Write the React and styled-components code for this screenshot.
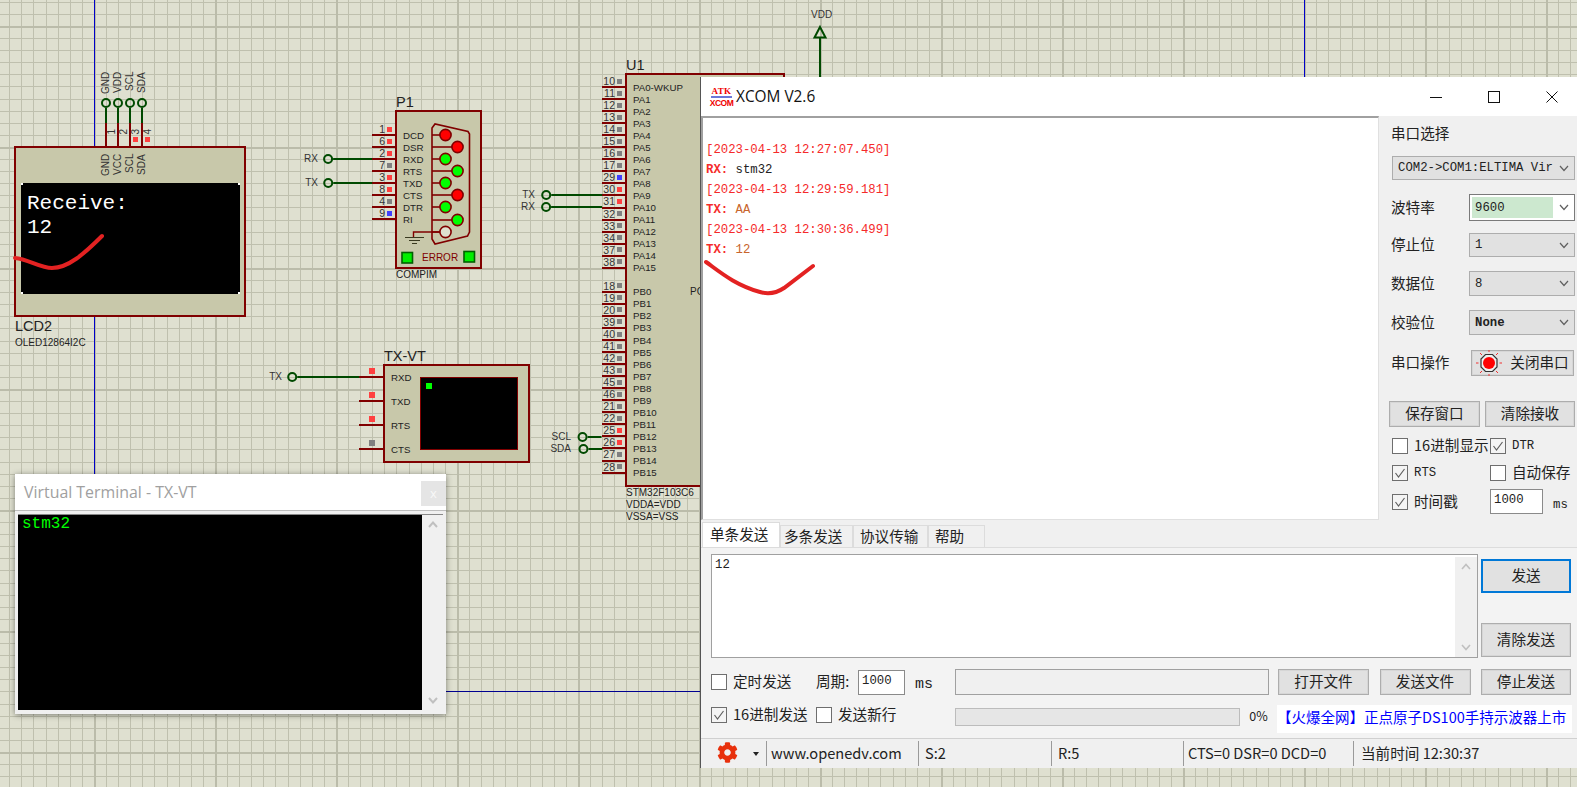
import React from "react";
import styled, { createGlobalStyle } from "styled-components";
import { FaCog } from "react-icons/fa";

const cjk = `"Noto Sans CJK SC", "Noto Sans", sans-serif`;
const sans = `"Liberation Sans", Arial, sans-serif`;
const mono = `"Liberation Mono", "Noto Sans CJK SC", monospace`;
const maroon = "#800000";
const wireGreen = "#004a00";

const GlobalStyle = createGlobalStyle`
  html, body { margin: 0; padding: 0; background: #dfe0d0; }
  * { box-sizing: border-box; }
`;

/* ---------- schematic sheet ---------- */

const Sheet = styled.div`
  position: relative;
  width: 1577px;
  height: 787px;
  overflow: hidden;
  font-family: ${sans};
  background-color: #dfe0d0;
  background-image:
    repeating-linear-gradient(90deg, #bbbcaa 94px, #bbbcaa 96px, transparent 96px, transparent 215px),
    repeating-linear-gradient(180deg, #bbbcaa 26px, #bbbcaa 28px, transparent 28px, transparent 147px),
    repeating-linear-gradient(90deg, #bfc0ae 9.3px, #bfc0ae 10.3px, transparent 10.3px, transparent 21.4px),
    repeating-linear-gradient(180deg, #bfc0ae 1.8px, #bfc0ae 2.8px, transparent 2.8px, transparent 13.9px);
`;

const BusLine = styled.div`
  position: absolute;
  left: ${(p) => p.$x}px;
  top: ${(p) => p.$y}px;
  width: ${(p) => p.$w}px;
  height: ${(p) => p.$h}px;
  background: ${(p) => p.$color || "#0000c8"};
`;

const Part = styled.div`
  position: absolute;
  left: ${(p) => p.$x}px;
  top: ${(p) => p.$y}px;
  width: ${(p) => p.$w}px;
  height: ${(p) => p.$h}px;
  background: #c8c8aa;
  border: 2px solid ${maroon};
`;

const PartRef = styled.div`
  position: absolute;
  left: ${(p) => p.$x}px;
  top: ${(p) => p.$y}px;
  transform: translateY(-50%);
  font-size: 14.5px;
  line-height: 16px;
  color: #222;
`;

const SmallText = styled.div`
  position: absolute;
  left: ${(p) => p.$x}px;
  top: ${(p) => p.$y}px;
  transform: translateY(-50%);
  font-size: 10px;
  line-height: 12px;
  white-space: nowrap;
  color: ${(p) => p.$color || "#222"};
`;

const NetStub = styled.div`
  position: absolute;
  left: ${(p) => p.$end}px;
  top: ${(p) => p.$y}px;
  transform: translate(-100%, -50%);
  display: flex;
  align-items: center;
`;

const NetName = styled.span`
  font-size: 10px;
  line-height: 12px;
  color: #333;
  margin-right: ${(p) => p.$gap}px;
`;

const Node = styled.span`
  display: block;
  flex: none;
  width: 10px;
  height: 10px;
  border: 2px solid ${wireGreen};
  border-radius: 50%;
`;

const Wire = styled.span`
  display: block;
  width: ${(p) => p.$len}px;
  height: 2px;
  background: ${wireGreen};
`;

const PinColumn = styled.div`
  position: absolute;
  left: ${(p) => p.$x}px;
  top: ${(p) => p.$y}px;
  width: ${(p) => p.$w}px;
  display: flex;
  flex-direction: column;
`;

const PinRow = styled.div`
  height: ${(p) => p.$pitch}px;
  display: flex;
  justify-content: ${(p) => (p.$bare ? "center" : "flex-end")};
  align-items: ${(p) => (p.$bare ? "flex-end" : "center")};
  gap: 2px;
  padding: ${(p) => (p.$bare ? "0 0 2px" : "0 4px 0 0")};
  border-bottom: 2px solid ${(p) => (p.$blank ? "transparent" : maroon)};
  font-size: 10.5px;
  line-height: 10px;
  color: #333;
`;

const PinDot = styled.i`
  display: block;
  flex: none;
  width: ${(p) => p.$size || 5}px;
  height: ${(p) => p.$size || 5}px;
  background: ${(p) => p.$color};
`;

const NameColumn = styled.div`
  position: absolute;
  left: ${(p) => p.$x}px;
  top: ${(p) => p.$y}px;
  display: flex;
  flex-direction: column;
`;

const NameRow = styled.div`
  height: ${(p) => p.$pitch}px;
  display: flex;
  align-items: center;
  font-size: 9.7px;
  color: #222;
  white-space: nowrap;
`;

const dotColors = { g: "#808080", r: "#ff4040", b: "#4040ff" };

function Pins({ x, y, w, pitch, rows, bare, size }) {
  return (
    <PinColumn $x={x} $y={y} $w={w}>
      {rows.map((r, i) =>
        r ? (
          <PinRow key={i} $pitch={pitch} $bare={bare}>
            {!bare && <span>{r[0]}</span>}
            <PinDot $color={dotColors[r[1]]} $size={size} />
          </PinRow>
        ) : (
          <PinRow key={i} $pitch={pitch} $blank />
        )
      )}
    </PinColumn>
  );
}

function Names({ x, y, pitch, names }) {
  return (
    <NameColumn $x={x} $y={y}>
      {names.map((n, i) => (
        <NameRow key={i} $pitch={pitch}>
          {n}
        </NameRow>
      ))}
    </NameColumn>
  );
}

/* LCD module */

const LcdPinHeader = styled.div`
  position: absolute;
  left: 100px;
  top: 72px;
  display: flex;
`;

const LcdPin = styled.div`
  width: 12px;
  display: flex;
  flex-direction: column;
  align-items: center;
`;

const UpLabel = styled.span`
  writing-mode: vertical-rl;
  transform: rotate(180deg);
  font-size: 10px;
  line-height: 12px;
  color: #333;
  height: ${(p) => p.$h}px;
  text-align: right;
`;

const GreenStem = styled.span`
  display: block;
  width: 2px;
  height: 15px;
  background: ${wireGreen};
`;

const RedStem = styled.span`
  position: relative;
  display: block;
  width: 2px;
  height: 24px;
  background: ${maroon};
`;

const StemNumber = styled.span`
  position: absolute;
  left: 2px;
  top: 6px;
  writing-mode: vertical-rl;
  transform: rotate(180deg);
  font-size: 10px;
  line-height: 10px;
  color: #333;
`;

const StemDot = styled.i`
  position: absolute;
  left: 4px;
  top: 14px;
  width: 5px;
  height: 5px;
  background: #ff4040;
`;

const LcdNames = styled.div`
  display: flex;
  height: 35px;
  margin-left: 84px;
  padding-top: 6px;
`;

const LcdScreen = styled.div`
  width: 219px;
  height: 111px;
  margin-left: 5px;
  padding: 9px 6px;
  font-family: ${mono};
  font-size: 21px;
  line-height: 24px;
  color: #fff;
  background:
    linear-gradient(#fff, #fff) 0 0 / 2px 2px no-repeat,
    linear-gradient(#fff, #fff) 100% 0 / 2px 2px no-repeat,
    linear-gradient(#fff, #fff) 0 100% / 2px 2px no-repeat,
    linear-gradient(#fff, #fff) 100% 100% / 2px 2px no-repeat,
    #000;
`;

/* virtual terminal symbol */

const VtBody = styled(Part)`
  padding: 11px 0 0 35px;
`;

const VtScreen = styled.div`
  width: 98px;
  height: 73px;
  background: #000;
  border: 1px solid ${maroon};
  padding: 5px;
`;

const VtCursor = styled.i`
  display: block;
  width: 6px;
  height: 6px;
  background: #00ff00;
`;

const ConnectorArt = styled.svg`
  position: absolute;
  left: 0;
  top: 0;
`;

const VddArt = styled.svg`
  position: absolute;
  left: 810px;
  top: 24px;
`;

const PenStroke = styled.svg`
  position: absolute;
  left: 0;
  top: 0;
  pointer-events: none;
`;

/* ---------- virtual terminal window ---------- */

const TerminalWindow = styled.div`
  position: absolute;
  left: 15px;
  top: 474px;
  width: 431px;
  height: 240px;
  display: flex;
  flex-direction: column;
  background: #f0f0f0;
  box-shadow: 0 1px 6px rgba(0, 0, 0, 0.45);
`;

const TerminalTitle = styled.div`
  height: 37px;
  flex: none;
  display: flex;
  justify-content: space-between;
  align-items: flex-end;
  padding: 0 0 4px 9px;
  background: #fff;
  font-family: "Open Sans", sans-serif;
  font-size: 15.9px;
  color: #a0a0a0;
  border-bottom: 1px solid #bdbdbd;
`;

const TerminalTitleText = styled.span`
  line-height: 28px;
`;

const GhostClose = styled.span`
  width: 25px;
  height: 25px;
  background: #e5e5e5;
  color: #f8f8f8;
  font-size: 13px;
  line-height: 25px;
  text-align: center;
`;

const TerminalBody = styled.div`
  flex: 1;
  display: flex;
  margin: 3px 3px 4px;
  border-top: 1px solid #888;
  min-height: 0;
`;

const TerminalScreen = styled.div`
  flex: 1;
  background: #000;
  color: #00ff00;
  font-family: ${mono};
  font-size: 16px;
  line-height: 16px;
  padding: 1px 4px;
`;

const ScrollTrack = styled.div`
  width: ${(p) => p.$w || 21}px;
  flex: none;
  display: flex;
  flex-direction: column;
  justify-content: space-between;
  align-items: center;
  padding: 6px 0;
  background: #f0f0f0;
`;

function Chevron({ up, color = "#606060", w = 10, sw = 1.2 }) {
  return (
    <svg width={w} height={w * 0.7} viewBox="0 0 10 7" style={{ display: "block" }}>
      <polyline
        points={up ? "1,6 5,1.5 9,6" : "1,1 5,5.5 9,1"}
        fill="none"
        stroke={color}
        strokeWidth={sw}
      />
    </svg>
  );
}

/* ---------- XCOM window ---------- */

const XcomWindow = styled.div`
  position: absolute;
  left: 700px;
  top: 77px;
  width: 877px;
  height: 691px;
  display: flex;
  flex-direction: column;
  background: #f0f0f0;
  border-left: 1px solid #555;
  font-family: ${cjk};
  color: #222;
`;

const TitleBar = styled.div`
  height: 39px;
  flex: none;
  display: flex;
  align-items: center;
  padding: 0 19px 0 10px;
  background: #fff;
`;

const LogoMark = styled.div`
  width: 21px;
  margin-right: 4px;
  display: flex;
  flex-direction: column;
  align-items: center;
  color: #f00000;
  font-family: "Liberation Sans", sans-serif;
  font-weight: 700;
  line-height: 8px;
`;

const LogoTop = styled.span`
  font-family: "Liberation Serif", serif;
  font-size: 9px;
  letter-spacing: 0.4px;
  border-bottom: 2px solid #6a78d8;
  padding-bottom: 1px;
  margin-bottom: 1px;
`;

const LogoBottom = styled.span`
  font-size: 8.5px;
  letter-spacing: -0.5px;
`;

const TitleText = styled.div`
  flex: 1;
  font-family: "Open Sans", sans-serif;
  font-size: 15.4px;
  color: #111;
`;

const WindowButtons = styled.div`
  display: flex;
  align-items: center;
  gap: 46px;
`;

const MainArea = styled.div`
  height: 404px;
  flex: none;
  display: flex;
`;

const LogArea = styled.div`
  width: 678px;
  flex: none;
  padding: 22px 0 0 3px;
  background: #fff;
  border-left: 2px solid #a0a0a0;
  border-top: 2px solid #a0a0a0;
  border-right: 1px solid #e0e0e0;
  border-bottom: 1px solid #e0e0e0;
  font-family: ${mono};
  font-size: 12.3px;
`;

const LogLine = styled.div`
  height: 20.1px;
  line-height: 20.1px;
  white-space: pre;
  color: #f52a2a;
`;

const LogTag = styled.b`
  color: #f52a2a;
`;

const LogData = styled.span`
  color: ${(p) => p.$color};
`;

const SidePanel = styled.div`
  flex: 1;
  padding: 7px 2px 0 12px;
  font-size: 14.6px;
`;

const SideTitle = styled.div`
  height: 20px;
  line-height: 20px;
`;

const Combo = styled.div`
  height: ${(p) => p.$h || 24}px;
  display: flex;
  align-items: center;
  justify-content: space-between;
  padding: ${(p) => (p.$active ? "2px 5px 2px 2px" : "0 5px")};
  margin-top: ${(p) => p.$mt || 0}px;
  margin-left: ${(p) => p.$ml || 0}px;
  background: ${(p) => (p.$active ? "#fff" : "#e1e1e1")};
  border: ${(p) => (p.$active ? "1px solid #7a7a7a" : "1px solid #adadad")};
  font-family: ${mono};
  font-size: 12.3px;
  white-space: nowrap;
`;

const ComboValue = styled.span`
  flex: ${(p) => (p.$active ? "none" : "initial")};
  width: ${(p) => (p.$active ? "81px" : "auto")};
  height: ${(p) => (p.$active ? "100%" : "auto")};
  display: flex;
  align-items: center;
  padding-left: ${(p) => (p.$active ? "3px" : "0")};
  background: ${(p) => (p.$active ? "#cce8cf" : "transparent")};
  font-weight: ${(p) => (p.$bold ? 700 : 400)};
`;

const FormRow = styled.div`
  display: grid;
  grid-template-columns: 78px 1fr;
  align-items: center;
  margin-top: ${(p) => p.$mt}px;
`;

const FormLabel = styled.span`
  margin-top: -3px;
`;

const PushButton = styled.button`
  display: flex;
  align-items: center;
  justify-content: center;
  height: ${(p) => p.$h || 26}px;
  width: ${(p) => (p.$w ? `${p.$w}px` : "auto")};
  flex: none;
  padding: 0 0 3px;
  margin: 0;
  background: #e1e1e1;
  border: ${(p) => (p.$focus ? "2px solid #0078d7" : "1px solid #adadad")};
  box-shadow: ${(p) => (p.$focus ? "none" : "inset 0 0 0 1px #d6d6d6")};
  font-family: ${cjk};
  font-size: 14.6px;
  color: #222;
`;

const PortButton = styled(PushButton)`
  margin: 0 1px 0 2px;
  width: 103px;
  gap: 8px;
`;

const LampWrap = styled.span`
  display: flex;
  margin-top: 3px;
`;

const ButtonRow = styled.div`
  display: grid;
  grid-template-columns: 91px 90px;
  gap: 5px;
  margin: 25px 0 0 -2px;
`;

const CheckGrid = styled.div`
  display: grid;
  grid-template-columns: 98px 1fr;
  align-items: center;
  height: ${(p) => p.$h}px;
  margin-top: ${(p) => p.$mt}px;
  margin-left: 1px;
`;

const CheckLabel = styled.div`
  display: flex;
  align-items: center;
  gap: 6px;
  white-space: nowrap;
  width: ${(p) => (p.$w ? `${p.$w}px` : "auto")};
  flex: none;
  font-size: 14.6px;
`;

const CheckText = styled.span`
  margin-top: -3px;
`;

const SlimCheck = styled.div`
  margin-bottom: 6px;
`;

const MonoNote = styled.span`
  display: block;
  margin-top: 3px;
  font-family: ${mono};
  font-size: 12.3px;
`;

const Box = styled.span`
  display: flex;
  align-items: center;
  justify-content: center;
  width: 16px;
  height: 16px;
  flex: none;
  border: 1.5px solid #6e6e6e;
  background: ${(p) => (p.$on ? "#f4f4f4" : "#fff")};
`;

function Check({ on, children, w }) {
  return (
    <CheckLabel $w={w}>
      <Box $on={on}>
        {on && (
          <svg width="12" height="12" viewBox="0 0 12 12">
            <polyline points="1.5,6 4.5,10 10.5,2" fill="none" stroke="#5f5f5f" strokeWidth="1.2" />
          </svg>
        )}
      </Box>
      <CheckText>{children}</CheckText>
    </CheckLabel>
  );
}

const NumInput = styled.div`
  width: ${(p) => p.$w}px;
  height: 25px;
  flex: none;
  padding-left: 3px;
  background: #fff;
  border: 1.5px solid #8a8a8a;
  font-family: ${mono};
  font-size: 12.3px;
  line-height: 21px;
`;

const MsLine = styled.div`
  display: flex;
  align-items: center;
  gap: 10px;
`;

const MsText = styled.span`
  font-family: ${mono};
  font-size: 12.3px;
  padding-top: 6px;
`;

const TabStrip = styled.div`
  height: 27px;
  flex: none;
  display: flex;
  align-items: flex-end;
  padding-left: 1px;
`;

const Tab = styled.div`
  width: ${(p) => p.$w}px;
  height: ${(p) => (p.$active ? 25 : 22)}px;
  padding: 0 0 3px ${(p) => p.$pad}px;
  display: flex;
  align-items: center;
  background: ${(p) => (p.$active ? "#fff" : "#f0f0f0")};
  border: 1px solid #dcdcdc;
  border-bottom: none;
  font-size: 14.6px;
`;

const TabPane = styled.div`
  height: 191px;
  flex: none;
  padding: 6px 6px 0 10px;
  background: #f3f3f3;
  border-top: 1px solid #dcdcdc;
  font-size: 14.6px;
`;

const SendTop = styled.div`
  display: flex;
  gap: 3px;
  height: 104px;
`;

const SendBox = styled.div`
  width: 767px;
  flex: none;
  display: flex;
  justify-content: space-between;
  background: #fff;
  border: 1.5px solid #a0a0a0;
  padding: 2px 0 0 3px;
  font-family: ${mono};
  font-size: 12.3px;
  line-height: 17px;
`;

const SendActions = styled.div`
  flex: 1;
  display: flex;
  flex-direction: column;
  justify-content: space-between;
  padding: 5px 0 1px;
`;

const ControlRow = styled.div`
  display: flex;
  align-items: center;
  height: 28px;
  margin-top: ${(p) => p.$mt}px;
`;

const PeriodLabel = styled.span`
  width: 42px;
  flex: none;
  white-space: nowrap;
  margin-top: -3px;
`;

const MsSlot = styled.span`
  width: 50px;
  flex: none;
  padding: 4px 0 0 10px;
  font-family: ${mono};
  font-size: 15px;
`;

const PathField = styled.div`
  width: 314px;
  height: 26px;
  flex: none;
  margin-right: 9px;
  background: #f0f0f0;
  border: 1.5px solid #a0a0a0;
`;

const FileButtons = styled.div`
  display: flex;
  justify-content: space-between;
  flex: 1;
`;

const ProgressTrack = styled.div`
  width: 285px;
  height: 18px;
  flex: none;
  margin-bottom: 2px;
  background: #e6e6e6;
  border: 1px solid #bcbcbc;
`;

const Percent = styled.span`
  width: 37px;
  flex: none;
  text-align: center;
  font-size: 12.5px;
  margin-bottom: 6px;
`;

const AdStrip = styled.div`
  width: 295px;
  height: 28px;
  flex: none;
  margin-top: 1px;
  background: #fff;
  color: #0000ff;
  line-height: 24px;
  font-size: 14.5px;
  white-space: nowrap;
`;

const StatusBar = styled.div`
  height: 30px;
  flex: none;
  display: flex;
  align-items: stretch;
  padding: 2px 0;
  background: #f0f0f0;
  border-top: 1px solid #d0d0d0;
  font-size: 14.6px;
`;

const StatusCell = styled.div`
  width: ${(p) => (p.$w ? `${p.$w}px` : "auto")};
  flex: ${(p) => (p.$w ? "none" : 1)};
  display: flex;
  align-items: center;
  padding: 0 0 2px ${(p) => p.$pad ?? 4}px;
  white-space: nowrap;
  border-left: ${(p) => (p.$first ? "none" : "1px solid #9a9a9a")};
`;

const DropArrow = styled.i`
  display: block;
  width: 0;
  height: 0;
  margin: 2px 0 0 15px;
  border-left: 3px solid transparent;
  border-right: 3px solid transparent;
  border-top: 4px solid #222;
`;

function PortLamp() {
  return (
    <svg width="26" height="26" viewBox="0 0 26 26">
      <path d="M9.5 4.5h7l4.5 4.5v8l-4.5 4.5h-7L5 17V9z" fill="#eee" stroke="#333" strokeWidth="1.2" />
      <circle cx="13" cy="13" r="6" fill="#ff0000" />
      <g stroke="#f03030" strokeWidth="1">
        <line x1="13" y1="0" x2="13" y2="2" />
        <line x1="13" y1="24" x2="13" y2="26" />
        <line x1="0" y1="13" x2="2.5" y2="13" />
        <line x1="23.5" y1="13" x2="26" y2="13" />
        <line x1="4" y1="3" x2="6" y2="5" />
        <line x1="22" y1="3" x2="20" y2="5" />
        <line x1="4" y1="23" x2="6" y2="21" />
        <line x1="22" y1="23" x2="20" y2="21" />
      </g>
    </svg>
  );
}

const chipPins = [
  ["10", "g"], ["11", "g"], ["12", "g"], ["13", "g"], ["14", "g"], ["15", "g"], ["16", "g"], ["17", "g"],
  ["29", "b"], ["30", "r"], ["31", "r"], ["32", "g"], ["33", "g"], ["34", "g"], ["37", "g"], ["38", "g"],
  null,
  ["18", "g"], ["19", "g"], ["20", "g"], ["39", "g"], ["40", "g"], ["41", "g"], ["42", "g"], ["43", "g"],
  ["45", "g"], ["46", "g"], ["21", "g"], ["22", "g"], ["25", "r"], ["26", "r"], ["27", "g"], ["28", "g"],
];

const chipNames = [
  "PA0-WKUP", "PA1", "PA2", "PA3", "PA4", "PA5", "PA6", "PA7", "PA8", "PA9", "PA10", "PA11", "PA12", "PA13", "PA14", "PA15",
  "",
  "PB0", "PB1", "PB2", "PB3", "PB4", "PB5", "PB6", "PB7", "PB8", "PB9", "PB10", "PB11", "PB12", "PB13", "PB14", "PB15",
];

const compimPins = [["1", "r"], ["6", "r"], ["2", "r"], ["7", "g"], ["3", "r"], ["8", "r"], ["4", "g"], ["9", "b"]];
const compimNames = ["DCD", "DSR", "RXD", "RTS", "TXD", "CTS", "DTR", "RI"];

const vtPins = [["", "r"], ["", "r"], ["", "r"], ["", "g"]];
const vtNames = ["RXD", "TXD", "RTS", "CTS"];

const lcdPins = [
  { net: "GND", num: "1" },
  { net: "VDD", num: "2" },
  { net: "SCL", num: "3", live: true },
  { net: "SDA", num: "4", live: true },
];

const RED = "#ff0000";
const GRN = "#00ff00";
const db9 = [
  [0, 135, RED], [1, 147, RED], [0, 159, GRN], [1, 171, GRN], [0, 183, GRN],
  [1, 195, RED], [0, 207, GRN], [1, 220, GRN], [0, 232, "#dfe0d0"],
];

function Db9() {
  // coordinates are sheet coordinates, the viewBox lines them up with the P1 body
  return (
    <ConnectorArt width="83" height="155" viewBox="397 112 83 155">
      <path
        d="M432 128 L435 124 L468 131.5 L469.5 134 L469.5 232 L467.5 236 L435 244 L432 239 Z"
        fill="none"
        stroke={maroon}
        strokeWidth="1.6"
      />
      {db9.map(([col, y, fill]) => (
        <g key={y}>
          <line x1="432" x2={col ? 452 : 440} y1={y} y2={y} stroke={maroon} strokeWidth="1.6" />
          <circle cx={col ? 457.5 : 445.5} cy={y} r="5.6" fill={fill} stroke={maroon} strokeWidth="1.6" />
        </g>
      ))}
      <path d="M440 232 H413.5 V237" fill="none" stroke={maroon} strokeWidth="1.4" />
      <path d="M405 237.5 H424 M409 240.5 H420 M412 243.5 H417" stroke="#3a3a20" strokeWidth="1.2" />
      <rect x="402" y="252.5" width="10.5" height="10.5" fill="#00ee00" stroke="#006000" strokeWidth="1.6" />
      <rect x="464" y="251.5" width="10.5" height="10.5" fill="#00ee00" stroke="#006000" strokeWidth="1.6" />
    </ConnectorArt>
  );
}

export default function App() {
  return (
    <Sheet>
      <GlobalStyle />

      <BusLine $x={94} $y={0} $w={1} $h={474} />
      <BusLine $x={1304} $y={0} $w={1} $h={77} />
      <BusLine $x={446} $y={691} $w={254} $h={1} $color="#000090" />

      <VddArt width="20" height="54" viewBox="0 0 20 54">
        <path d="M10 3 L15.5 13.5 H4.5 Z M10 13.5 V53" fill="none" stroke={wireGreen} strokeWidth="2" />
      </VddArt>
      <SmallText $x={811} $y={15} $color="#333">VDD</SmallText>

      {/* LCD2 */}
      <Part $x={14} $y={146} $w={232} $h={171}>
        <LcdNames>
          {["GND", "VCC", "SCL", "SDA"].map((n) => (
            <LcdPin key={n}>
              <UpLabel $h={26}>{n}</UpLabel>
            </LcdPin>
          ))}
        </LcdNames>
        <LcdScreen>
          Receive:
          <br />
          12
        </LcdScreen>
      </Part>
      <LcdPinHeader>
        {lcdPins.map((p) => (
          <LcdPin key={p.num}>
            <UpLabel $h={26}>{p.net}</UpLabel>
            <Node />
            <GreenStem />
            <RedStem>
              <StemNumber>{p.num}</StemNumber>
              {p.live && <StemDot />}
            </RedStem>
          </LcdPin>
        ))}
      </LcdPinHeader>
      <PartRef $x={15} $y={326}>LCD2</PartRef>
      <SmallText $x={15} $y={343}>OLED12864I2C</SmallText>

      {/* P1 */}
      <PartRef $x={396} $y={102}>P1</PartRef>
      <Part $x={395} $y={110} $w={87} $h={159}>
        <Db9 />
      </Part>
      <Pins x={372} y={124} w={24} pitch={12.05} rows={compimPins} />
      <Names x={403} y={129} pitch={12.05} names={compimNames} />
      <SmallText $x={422} $y={258} $color={maroon}>ERROR</SmallText>
      <SmallText $x={396} $y={275}>COMPIM</SmallText>
      <NetStub $end={372} $y={159}>
        <NetName $gap={5}>RX</NetName>
        <Node />
        <Wire $len={39} />
      </NetStub>
      <NetStub $end={372} $y={183}>
        <NetName $gap={5}>TX</NetName>
        <Node />
        <Wire $len={39} />
      </NetStub>

      {/* TX-VT */}
      <PartRef $x={384} $y={356}>TX-VT</PartRef>
      <VtBody $x={383} $y={364} $w={147} $h={99}>
        <VtScreen>
          <VtCursor />
        </VtScreen>
      </VtBody>
      <Pins x={359} y={354} w={25} pitch={24} rows={vtPins} bare size={6} />
      <Names x={391} y={365} pitch={24} names={vtNames} />
      <NetStub $end={359} $y={377}>
        <NetName $gap={5}>TX</NetName>
        <Node />
        <Wire $len={62} />
      </NetStub>

      {/* U1 */}
      <PartRef $x={626} $y={65}>U1</PartRef>
      <Part $x={625} $y={73} $w={160} $h={414} />
      <Pins x={602} y={76} w={24} pitch={12.05} rows={chipPins} />
      <Names x={633} y={81} pitch={12.05} names={chipNames} />
      <SmallText $x={690} $y={292}>PC13</SmallText>
      <SmallText $x={626} $y={493}>STM32F103C6</SmallText>
      <SmallText $x={626} $y={505}>VDDA=VDD</SmallText>
      <SmallText $x={626} $y={517}>VSSA=VSS</SmallText>
      <NetStub $end={602} $y={195}>
        <NetName $gap={6}>TX</NetName>
        <Node />
        <Wire $len={51} />
      </NetStub>
      <NetStub $end={602} $y={207}>
        <NetName $gap={6}>RX</NetName>
        <Node />
        <Wire $len={51} />
      </NetStub>
      <NetStub $end={602} $y={437}>
        <NetName $gap={7}>SCL</NetName>
        <Node />
        <Wire $len={14} />
      </NetStub>
      <NetStub $end={602} $y={449}>
        <NetName $gap={7}>SDA</NetName>
        <Node />
        <Wire $len={14} />
      </NetStub>

      {/* proteus terminal window */}
      <TerminalWindow>
        <TerminalTitle>
          <TerminalTitleText>Virtual Terminal - TX-VT</TerminalTitleText>
          <GhostClose>x</GhostClose>
        </TerminalTitle>
        <TerminalBody>
          <TerminalScreen>stm32</TerminalScreen>
          <ScrollTrack>
            <Chevron up color="#c0c0c0" sw={2} />
            <Chevron color="#c0c0c0" sw={2} />
          </ScrollTrack>
        </TerminalBody>
      </TerminalWindow>

      {/* XCOM */}
      <XcomWindow>
        <TitleBar>
          <LogoMark>
            <LogoTop>ATK</LogoTop>
            <LogoBottom>XCOM</LogoBottom>
          </LogoMark>
          <TitleText>XCOM V2.6</TitleText>
          <WindowButtons>
            <svg width="12" height="12" viewBox="0 0 12 12">
              <line x1="0" y1="6.5" x2="12" y2="6.5" stroke="#111" />
            </svg>
            <svg width="12" height="12" viewBox="0 0 12 12">
              <rect x="0.5" y="0.5" width="11" height="11" fill="none" stroke="#111" />
            </svg>
            <svg width="12" height="12" viewBox="0 0 12 12">
              <path d="M0.5 0.5 L11.5 11.5 M11.5 0.5 L0.5 11.5" stroke="#111" />
            </svg>
          </WindowButtons>
        </TitleBar>

        <MainArea>
          <LogArea>
            <LogLine>[2023-04-13 12:27:07.450]</LogLine>
            <LogLine>
              <LogTag>RX:</LogTag> <LogData $color="#222">stm32</LogData>
            </LogLine>
            <LogLine>[2023-04-13 12:29:59.181]</LogLine>
            <LogLine>
              <LogTag>TX:</LogTag> <LogData $color="#c8652c">AA</LogData>
            </LogLine>
            <LogLine>[2023-04-13 12:30:36.499]</LogLine>
            <LogLine>
              <LogTag>TX:</LogTag> <LogData $color="#c8652c">12</LogData>
            </LogLine>
          </LogArea>
          <SidePanel>
            <SideTitle>串口选择</SideTitle>
            <Combo $mt={13} $ml={1}>
              <ComboValue>COM2-&gt;COM1:ELTIMA Vir</ComboValue>
              <Chevron />
            </Combo>
            <FormRow $mt={14}>
              <FormLabel>波特率</FormLabel>
              <Combo $h={27} $active>
                <ComboValue $active>9600</ComboValue>
                <Chevron />
              </Combo>
            </FormRow>
            <FormRow $mt={12}>
              <FormLabel>停止位</FormLabel>
              <Combo>
                <ComboValue>1</ComboValue>
                <Chevron />
              </Combo>
            </FormRow>
            <FormRow $mt={14}>
              <FormLabel>数据位</FormLabel>
              <Combo $h={25}>
                <ComboValue>8</ComboValue>
                <Chevron />
              </Combo>
            </FormRow>
            <FormRow $mt={14}>
              <FormLabel>校验位</FormLabel>
              <Combo $h={25}>
                <ComboValue $bold>None</ComboValue>
                <Chevron />
              </Combo>
            </FormRow>
            <FormRow $mt={15}>
              <FormLabel>串口操作</FormLabel>
              <PortButton>
                <LampWrap>
                  <PortLamp />
                </LampWrap>
                关闭串口
              </PortButton>
            </FormRow>
            <ButtonRow>
              <PushButton>保存窗口</PushButton>
              <PushButton>清除接收</PushButton>
            </ButtonRow>
            <CheckGrid $h={22} $mt={8}>
              <Check>16进制显示</Check>
              <Check on>
                <MonoNote>DTR</MonoNote>
              </Check>
            </CheckGrid>
            <CheckGrid $h={22} $mt={5}>
              <Check on>
                <MonoNote>RTS</MonoNote>
              </Check>
              <Check>自动保存</Check>
            </CheckGrid>
            <CheckGrid $h={25} $mt={5}>
              <Check on>时间戳</Check>
              <MsLine>
                <NumInput $w={53}>1000</NumInput>
                <MsText>ms</MsText>
              </MsLine>
            </CheckGrid>
          </SidePanel>
        </MainArea>

        <TabStrip>
          <Tab $w={78} $active $pad={7}>单条发送</Tab>
          <Tab $w={73} $pad={3}>多条发送</Tab>
          <Tab $w={75} $pad={6}>协议传输</Tab>
          <Tab $w={57} $pad={6}>帮助</Tab>
        </TabStrip>
        <TabPane>
          <SendTop>
            <SendBox>
              12
              <ScrollTrack $w={22}>
                <Chevron up color="#c0c0c0" sw={1.6} />
                <Chevron color="#c0c0c0" sw={1.6} />
              </ScrollTrack>
            </SendBox>
            <SendActions>
              <PushButton $h={34} $focus>发送</PushButton>
              <PushButton $h={34}>清除发送</PushButton>
            </SendActions>
          </SendTop>
          <ControlRow $mt={10}>
            <Check w={105}>定时发送</Check>
            <PeriodLabel>周期:</PeriodLabel>
            <NumInput $w={47}>1000</NumInput>
            <MsSlot>ms</MsSlot>
            <PathField />
            <FileButtons>
              <PushButton $w={91}>打开文件</PushButton>
              <PushButton $w={91}>发送文件</PushButton>
              <PushButton $w={90}>停止发送</PushButton>
            </FileButtons>
          </ControlRow>
          <ControlRow $mt={8}>
            <SlimCheck>
              <Check on w={105}>16进制发送</Check>
            </SlimCheck>
            <SlimCheck>
              <Check w={139}>发送新行</Check>
            </SlimCheck>
            <ProgressTrack />
            <Percent>0%</Percent>
            <AdStrip>【火爆全网】正点原子DS100手持示波器上市</AdStrip>
          </ControlRow>
        </TabPane>
        <StatusBar>
          <StatusCell $first $w={65} $pad={16}>
            <FaCog size={21} color="#e8300c" />
            <DropArrow />
          </StatusCell>
          <StatusCell $w={152}>www.openedv.com</StatusCell>
          <StatusCell $w={133} $pad={6}>S:2</StatusCell>
          <StatusCell $w={132} $pad={6}>R:5</StatusCell>
          <StatusCell $w={170}>CTS=0 DSR=0 DCD=0</StatusCell>
          <StatusCell $pad={7}>当前时间 12:30:37</StatusCell>
        </StatusBar>
      </XcomWindow>

      {/* red pen marks on top of the screenshot */}
      <PenStroke width="1577" height="787" viewBox="0 0 1577 787">
        <path
          d="M15 258 C28 259 40 268 52 268 C68 268 84 254 102 236"
          fill="none"
          stroke="#e32222"
          strokeWidth="4"
          strokeLinecap="round"
        />
        <path
          d="M706 262 C720 272 735 285 760 292 C770 295 778 292 784 288 L813 266"
          fill="none"
          stroke="#e32222"
          strokeWidth="4"
          strokeLinecap="round"
        />
      </PenStroke>
    </Sheet>
  );
}
